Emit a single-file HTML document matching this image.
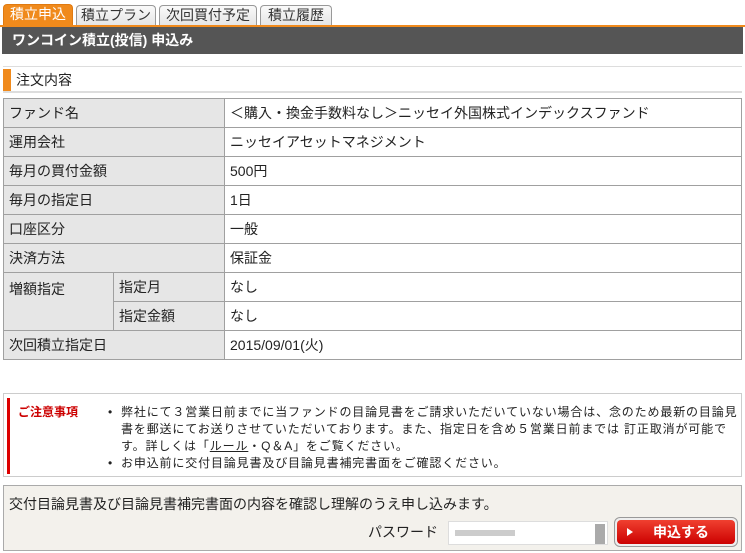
<!DOCTYPE html>
<html><head><meta charset="utf-8"><style>
*{box-sizing:border-box;margin:0;padding:0}
body{width:745px;height:553px;background:#fff;font-family:"Liberation Sans","Noto Sans CJK JP",sans-serif;font-size:14px;color:#222;position:relative;overflow:hidden}
.tabs{position:absolute;left:3px;top:4px;height:22px}
.tab{position:absolute;top:1px;height:21px;border:1px solid #999;border-bottom:none;border-radius:4px 4px 0 0;background:linear-gradient(#fafafa,#e4e4e4);font-size:14px;line-height:19px;text-align:center;color:#333}
.tab.on{top:0;height:22px;background:#f08a1c;color:#fff;border-color:#e07a10}
.oline{position:absolute;left:0;top:25px;width:745px;height:2px;background:#f08a1c}
.bar{position:absolute;left:2px;top:27px;width:741px;height:27px;background:#555;color:#fff;font-weight:bold;font-size:14px;line-height:27px;padding-left:10px}
.sec{position:absolute;left:3px;top:66px;width:739px;height:27px;border-top:1px solid #ddd;border-bottom:2px solid #ddd;line-height:26px;padding-left:13px;font-size:14px}
.sec:before{content:"";position:absolute;left:0;top:2px;width:8px;height:22px;background:#f08a1c}
table{position:absolute;left:3px;top:98px;width:739px;border-collapse:collapse;table-layout:fixed}
td{border:1px solid #a0a0a0;height:29px;padding:0 5px;font-size:14px}
td.l,td.s{background:#e6e6e6}
.note{position:absolute;left:3px;top:393px;width:739px;height:84px;border:1px solid #ccc;font-size:12px;line-height:17px;letter-spacing:0.85px}
.note:before{content:"";position:absolute;left:3px;top:4px;width:3px;height:76px;background:#d00}
.nt{position:absolute;left:14px;top:10px;color:#c00;font-weight:bold;letter-spacing:0}
.nl{position:absolute;left:102px;top:10px;width:634px}
.nl li{list-style:none;padding-left:15px;position:relative}
.nl li:before{content:"•";position:absolute;left:2px}
.nl a{color:#222;text-decoration:underline}
.bot{position:absolute;left:3px;top:485px;width:739px;height:66px;border:1px solid #aaa;background:#f3f1ec}
.bt{position:absolute;left:5px;top:8px;font-size:14px}
.pw{position:absolute;left:364px;top:36px;font-size:14px}
.inp{position:absolute;left:444px;top:35px;width:160px;height:24px;background:#fff;border:1px solid #ddd}
.inp:before{content:"";position:absolute;left:6px;top:8px;width:60px;height:6px;background:#ccc}
.inp:after{content:"";position:absolute;right:2px;top:2px;width:10px;height:20px;background:#aaa}
.btn{position:absolute;left:610px;top:31px;width:124px;height:30px;border:1px solid #999;border-radius:6px;background:#eee;padding:2px}
.btn div{width:100%;height:100%;border-radius:4px;background:linear-gradient(#f04030,#c00);color:#fff;font-weight:bold;font-size:14px;line-height:24px;text-align:center;padding-left:10px;position:relative}
.btn div:before{content:"";position:absolute;left:10px;top:8px;border-left:6px solid #fff;border-top:4px solid transparent;border-bottom:4px solid transparent}
</style></head><body>
<div class="tabs">
<div class="tab on" style="left:0;width:70px">積立申込</div>
<div class="tab" style="left:73px;width:80px">積立プラン</div>
<div class="tab" style="left:156px;width:98px">次回買付予定</div>
<div class="tab" style="left:257px;width:72px">積立履歴</div>
</div>
<div class="oline"></div>
<div class="bar">ワンコイン積立(投信) 申込み</div>
<div class="sec">注文内容</div>
<table>
<colgroup><col style="width:110px"><col style="width:111px"><col></colgroup>
<tr><td class="l" colspan="2">ファンド名</td><td>＜購入・換金手数料なし＞ニッセイ外国株式インデックスファンド</td></tr>
<tr><td class="l" colspan="2">運用会社</td><td>ニッセイアセットマネジメント</td></tr>
<tr><td class="l" colspan="2">毎月の買付金額</td><td>500円</td></tr>
<tr><td class="l" colspan="2">毎月の指定日</td><td>1日</td></tr>
<tr><td class="l" colspan="2">口座区分</td><td>一般</td></tr>
<tr><td class="l" colspan="2">決済方法</td><td>保証金</td></tr>
<tr><td class="s" rowspan="2" style="vertical-align:top;padding-top:6px">増額指定</td><td class="s">指定月</td><td>なし</td></tr>
<tr><td class="s">指定金額</td><td>なし</td></tr>
<tr><td class="l" colspan="2">次回積立指定日</td><td>2015/09/01(火)</td></tr>
</table>
<div class="note"><div class="nt">ご注意事項</div>
<ul class="nl"><li>弊社にて３営業日前までに当ファンドの目論見書をご請求いただいていない場合は、念のため最新の目論見書を郵送にてお送りさせていただいております。また、指定日を含め５営業日前までは 訂正取消が可能です。詳しくは「<a>ルール</a>・Q＆A」をご覧ください。</li>
<li>お申込前に交付目論見書及び目論見書補完書面をご確認ください。</li></ul></div>
<div class="bot"><div class="bt">交付目論見書及び目論見書補完書面の内容を確認し理解のうえ申し込みます。</div>
<div class="pw">パスワード</div><div class="inp"></div>
<div class="btn"><div>申込する</div></div></div>
</body></html>
